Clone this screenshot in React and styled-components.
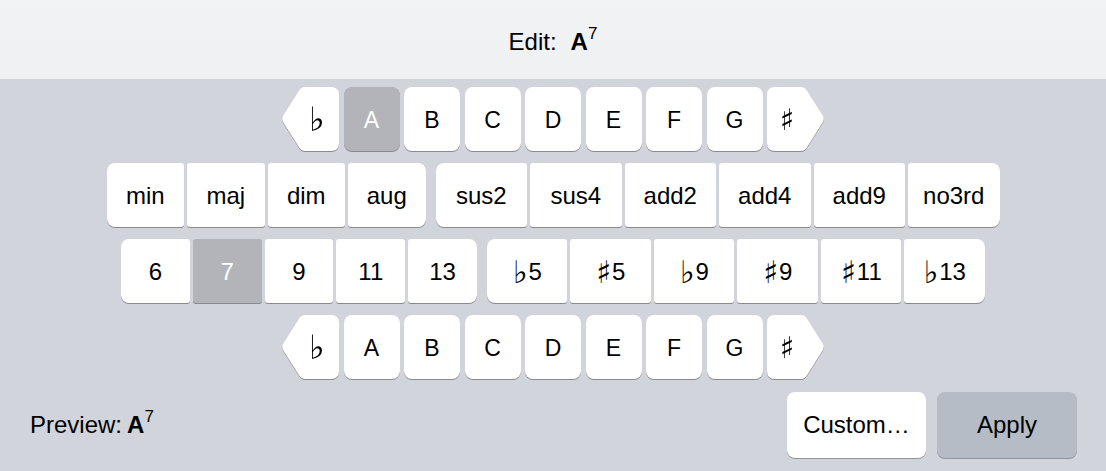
import React, { useState } from 'react';
import styled, { createGlobalStyle } from 'styled-components';

// Chord editor keyboard (root / quality / extension / bass rows)

const NOTES = ['A', 'B', 'C', 'D', 'E', 'F', 'G'];
const QUALITIES = [
  ['min', 'maj', 'dim', 'aug'],
  ['sus2', 'sus4', 'add2', 'add4', 'add9', 'no3rd'],
];
const EXTENSIONS = [
  ['6', '7', '9', '11', '13'],
  ['♭5', '♯5', '♭9', '♯9', '♯11', '♭13'],
];

const GlobalStyle = createGlobalStyle`
  html, body {
    margin: 0;
    padding: 0;
  }
  body {
    font-family: "Liberation Sans", Arial, sans-serif;
    background: #d1d4da;
    color: #000;
  }
`;

const edgeRadius = (pos) => {
  if (pos === 'first') return '8px 3px 3px 8px';
  if (pos === 'last') return '3px 8px 8px 3px';
  if (pos === 'middle') return '3px';
  return '8px';
};

const positionOf = (i, n) => (i === 0 ? 'first' : i === n - 1 ? 'last' : 'middle');

// splits "♭13" into accidental + number so the glyph can get its own font
const renderLabel = (label) => {
  const first = label[0];
  if (first === '♭' || first === '♯') {
    return (
      <>
        <Accidental $size={1.3}>{first}</Accidental>
        {label.slice(1)}
      </>
    );
  }
  return label;
};

export default function App() {
  const [root, setRoot] = useState('A');
  const [bass, setBass] = useState(null);
  const [quality, setQuality] = useState(null);
  const [ext, setExt] = useState('7');

  const chord = (
    <>
      {root}
      {quality && quality !== 'maj' ? <Sup>{quality}</Sup> : null}
      {ext ? <Sup>{ext}</Sup> : null}
    </>
  );

  return (
    <Screen>
      <GlobalStyle />
      <Header>
        Edit:<Chord $gap={14}>{chord}</Chord>
      </Header>

      <Keyboard>
        {/* ROOT */}
        <Row $gap={4.5}>
          <ArrowShadow>
            <ArrowFace $dir="left">
              <Accidental $size={1.45}>♭</Accidental>
            </ArrowFace>
          </ArrowShadow>
          {NOTES.map((n) => (
            <Key key={n} $w={56} $size={23} $on={root === n} onClick={() => setRoot(n)}>
              {n}
            </Key>
          ))}
          <ArrowShadow>
            <ArrowFace $dir="right">
              <Accidental $size={1.3}>♯</Accidental>
            </ArrowFace>
          </ArrowShadow>
        </Row>

        {/* QUALITY */}
        <Row $gap={10}>
          {QUALITIES.map((group, gi) => (
            <Group key={gi}>
              {group.map((q, i) => (
                <Key
                  key={q}
                  $w={gi === 0 ? 77.5 : 91.5}
                  $size={24}
                  $pos={positionOf(i, group.length)}
                  $on={quality === q}
                  onClick={() => setQuality(quality === q ? null : q)}
                >
                  {q}
                </Key>
              ))}
            </Group>
          ))}
        </Row>

        {/* EXTENSIONS */}
        <Row $gap={10}>
          {EXTENSIONS.map((group, gi) => (
            <Group key={gi}>
              {group.map((x, i) => (
                <Key
                  key={x}
                  $w={gi === 0 ? 68.8 : 80.5}
                  $size={24}
                  $pos={positionOf(i, group.length)}
                  $on={ext === x}
                  onClick={() => setExt(ext === x ? null : x)}
                >
                  {renderLabel(x)}
                </Key>
              ))}
            </Group>
          ))}
        </Row>

        {/* BASS */}
        <Row $gap={4.5}>
          <ArrowShadow>
            <ArrowFace $dir="left">
              <Accidental $size={1.45}>♭</Accidental>
            </ArrowFace>
          </ArrowShadow>
          {NOTES.map((n) => (
            <Key key={n} $w={56} $size={23} $on={bass === n} onClick={() => setBass(bass === n ? null : n)}>
              {n}
            </Key>
          ))}
          <ArrowShadow>
            <ArrowFace $dir="right">
              <Accidental $size={1.3}>♯</Accidental>
            </ArrowFace>
          </ArrowShadow>
        </Row>
      </Keyboard>

      <Footer>
        <Preview>
          Preview:<Chord $gap={5}>{chord}</Chord>
        </Preview>
        <Actions>
          <ActionButton $w={139}>Custom…</ActionButton>
          <ActionButton $w={140} $primary>Apply</ActionButton>
        </Actions>
      </Footer>
    </Screen>
  );
}

const Screen = styled.div`
  width: 1106px;
  height: 471px;
  display: flex;
  flex-direction: column;
  background: #d1d4da;
  overflow: hidden;
`;

const Header = styled.header`
  flex: none;
  height: 79px;
  box-sizing: border-box;
  padding-top: 5px;
  display: flex;
  align-items: center;
  justify-content: center;
  background: linear-gradient(#f2f3f4, #eff0f1);
  font-size: 24px;
  white-space: nowrap;
`;

const Chord = styled.span`
  margin-left: ${(p) => p.$gap}px;
  font-weight: bold;
`;

const Sup = styled.span`
  font-size: 17px;
  font-weight: normal;
  vertical-align: 11px;
  line-height: 0;
`;

const Keyboard = styled.div`
  display: flex;
  flex-direction: column;
  align-items: center;
  gap: 12px;
  padding-top: 8px;
`;

const Row = styled.div`
  display: flex;
  justify-content: center;
  gap: ${(p) => p.$gap}px;
`;

const Group = styled.div`
  display: flex;
  gap: 3px;
`;

const Key = styled.button`
  flex: none;
  width: ${(p) => p.$w}px;
  height: 64px;
  margin: 0;
  padding: 2px 0 0;
  border: none;
  border-radius: ${(p) => edgeRadius(p.$pos)};
  background: ${(p) => (p.$on ? '#b2b4b9' : '#fff')};
  color: ${(p) => (p.$on ? '#fff' : '#000')};
  box-shadow: 0 1px 0 rgba(0, 0, 0, 0.35);
  font-family: inherit;
  font-size: ${(p) => p.$size}px;
  display: flex;
  align-items: center;
  justify-content: center;
  cursor: pointer;
`;

const ArrowShadow = styled.div`
  flex: none;
  filter: drop-shadow(0 1px 0 rgba(0, 0, 0, 0.35));
`;

const ArrowFace = styled.button`
  width: 57.5px;
  height: 64px;
  margin: 0;
  border: none;
  background: #fff;
  color: #000;
  font-family: inherit;
  font-size: 23px;
  display: flex;
  align-items: center;
  justify-content: center;
  cursor: pointer;
  padding: ${(p) => (p.$dir === 'left' ? '2px 0 0 14px' : '2px 16px 0 0')};
  clip-path: ${(p) =>
    p.$dir === 'left'
      ? "path('M 24 0 H 49.5 Q 57.5 0 57.5 8 V 56 Q 57.5 64 49.5 64 H 24 Q 20 64 18 61 L 1.5 35 Q 0 32 1.5 29 L 18 3 Q 20 0 24 0 Z')"
      : "path('M 8 0 H 33.5 Q 37.5 0 39.5 3 L 56 29 Q 57.5 32 56 35 L 39.5 61 Q 37.5 64 33.5 64 H 8 Q 0 64 0 56 V 8 Q 0 0 8 0 Z')"};
`;

const Accidental = styled.span`
  font-family: "DejaVu Sans", sans-serif;
  font-size: ${(p) => p.$size}em;
  line-height: 0;
  margin-right: 1px;
`;

const Footer = styled.footer`
  flex: none;
  height: 66px;
  margin-top: 13px;
  padding: 0 29px 0 30px;
  display: flex;
  align-items: center;
  justify-content: space-between;
`;

const Preview = styled.div`
  font-size: 24px;
  white-space: nowrap;
`;

const Actions = styled.div`
  display: flex;
  gap: 11px;
`;

const ActionButton = styled.button`
  width: ${(p) => p.$w}px;
  height: 66px;
  margin: 0;
  padding: 0;
  border: none;
  border-radius: 8px;
  background: ${(p) => (p.$primary ? '#b6bcc6' : '#fff')};
  box-shadow: 0 1px 0 rgba(0, 0, 0, 0.3);
  color: #000;
  font-family: inherit;
  font-size: 24px;
  cursor: pointer;
`;
